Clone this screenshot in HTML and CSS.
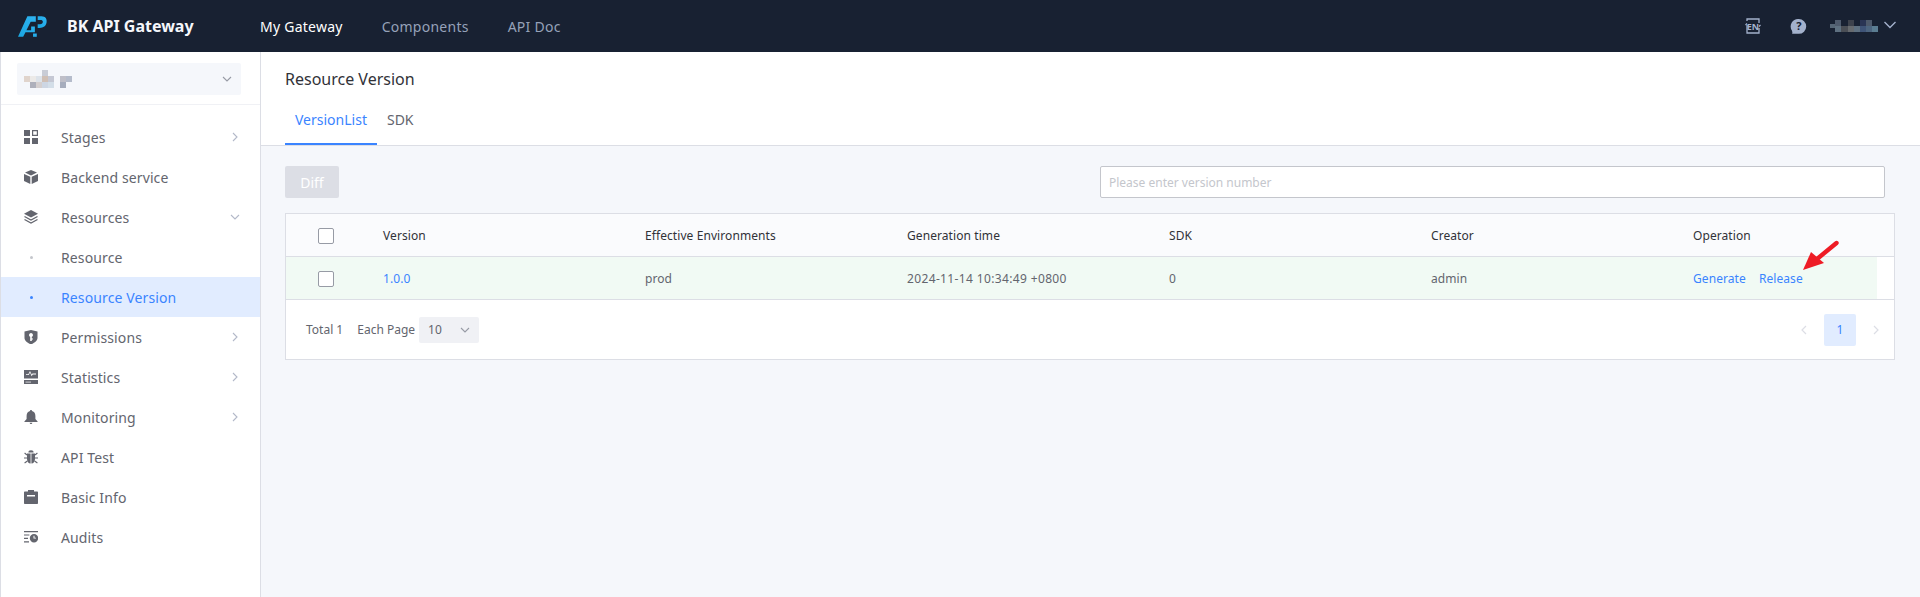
FILE: index.html
```html
<!DOCTYPE html>
<html lang="en">
<head>
  <meta charset="UTF-8" />
  <title>BK API Gateway</title>
  <meta name="viewport" content="width=device-width, initial-scale=1.0" />
  <link rel="stylesheet" href="styles.css">
</head>
<body>
  <header class="topbar">
    <div class="brand">
      <svg class="brand-logo" width="30" height="23" viewBox="0 0 32 24">
        <defs>
          <linearGradient id="logoFill" x1="0" y1="1" x2="1" y2="0">
            <stop offset="0" stop-color="#1aa5e0" />
            <stop offset="1" stop-color="#2fb4f2" />
          </linearGradient>
        </defs>
        <path fill="url(#logoFill)" d="M0 23 L10 1 H19 V7 H13.5 L9 16 H14 V12 H18 V18 H8 L5.5 23 Z" />
        <path fill="url(#logoFill)" d="M21 1 H25 C29.5 1 31 4 30.5 7.5 C30 11.5 27 13.5 23 13.5 H21 V9.5 H23.5 C25.5 9.5 26.5 8.5 26.5 7 C26.5 5.5 25.5 5 24 5 H21 Z" />
        <rect x="16" y="19.5" width="4" height="3.5" fill="url(#logoFill)" />
      </svg>
      <span class="brand-name">BK API Gateway</span>
    </div>
    <nav class="topnav">
      <a class="topnav-item active">My Gateway</a>
      <a class="topnav-item">Components</a>
      <a class="topnav-item">API Doc</a>
    </nav>
    <div class="topbar-right">
      <svg class="lang-icon" width="18" height="18" viewBox="0 0 18 18">
        <path d="M3 4 V2 H15 V6 M15 11 V16 H3 V8" fill="none" stroke="#a3b1cc" stroke-width="1.3" />
        <path d="M1.5 8 L3 6.5 M16.5 8 L15 9.5" stroke="#a3b1cc" stroke-width="1.2" />
        <text x="9" y="12.6" text-anchor="middle" class="lang-text">EN</text>
      </svg>
      <svg class="help-icon" width="17" height="17" viewBox="0 0 17 17">
        <path fill="#a3b1cc" d="M8.8 1 A7.4 7.4 0 1 1 8.8 15.8 H2 C2.6 15 2.4 14 1.9 12.4 A7.4 7.4 0 0 1 8.8 1 Z" />
        <text x="8.8" y="12.4" text-anchor="middle" class="help-text">?</text>
      </svg>
      <svg class="user-blur" width="48" height="12" viewBox="0 0 48 12" shape-rendering="crispEdges">
        <rect x="5" y="0" width="6" height="6" fill="#4f5b6d" />
        <rect x="18" y="0" width="6" height="6" fill="#3d424c" />
        <rect x="30" y="0" width="6" height="6" fill="#2a3555" />
        <rect x="36" y="0" width="6" height="6" fill="#4e5a6c" />
        <rect x="0" y="4" width="5" height="2" fill="#566676" />
        <rect x="0" y="6" width="11" height="2" fill="#566676" />
        <rect x="5" y="6" width="6" height="6" fill="#5e7080" />
        <rect x="11" y="6" width="7" height="6" fill="#4a4e55" />
        <rect x="18" y="6" width="6" height="6" fill="#666a6e" />
        <rect x="24" y="6" width="6" height="6" fill="#5e7080" />
        <rect x="30" y="6" width="6" height="6" fill="#3f5478" />
        <rect x="36" y="6" width="6" height="6" fill="#4d6580" />
        <rect x="42" y="6" width="6" height="6" fill="#5b7d92" />
      </svg>
      <svg class="user-caret" width="14" height="8" viewBox="0 0 14 8">
        <path d="M1.5 1 L7 6.5 L12.5 1" fill="none" stroke="#a3b1cc" stroke-width="1.4" />
      </svg>
    </div>
  </header>

  <div class="layout">
    <aside class="sidebar">
      <div class="picker-wrap">
        <div class="picker">
          <svg class="picker-blur" width="72" height="18" viewBox="0 0 72 18" shape-rendering="crispEdges">
            <rect x="27" y="0" width="6" height="6" fill="#c8ccd6" />
            <rect x="9" y="6" width="6" height="6" fill="#e0d4cc" />
            <rect x="15" y="6" width="6" height="6" fill="#eceae8" />
            <rect x="21" y="6" width="6" height="6" fill="#dde3ea" />
            <rect x="27" y="6" width="6" height="6" fill="#cfbfb5" />
            <rect x="33" y="6" width="6" height="6" fill="#c5c8d4" />
            <rect x="45" y="6" width="6" height="6" fill="#bfbfc8" />
            <rect x="51" y="6" width="6" height="6" fill="#b5bccb" />
            <rect x="15" y="12" width="6" height="6" fill="#aeb0bb" />
            <rect x="21" y="12" width="6" height="6" fill="#d4cfcf" />
            <rect x="27" y="12" width="6" height="6" fill="#cdd6e3" />
            <rect x="33" y="12" width="6" height="6" fill="#d3dee8" />
            <rect x="45" y="12" width="6" height="6" fill="#a6adbd" />
          </svg>
          <svg class="picker-caret" width="10" height="6" viewBox="0 0 10 6">
            <path d="M1 1 L5 5 L9 1" fill="none" stroke="#979ba5" stroke-width="1.1" />
          </svg>
        </div>
      </div>

      <ul class="menu">
        <li class="menu-item">
          <svg class="menu-icon" viewBox="0 0 14 14">
            <path d="M0 0h6v6H0zM0 8h6v6H0zM8 8h6v6H8z" />
            <path d="M8.6 .6h4.8v4.8H8.6z" fill="none" stroke="#63656e" stroke-width="1.2" />
          </svg>
          <span class="menu-text">Stages</span>
          <svg class="menu-arrow" viewBox="0 0 6 10"><path d="M1 1 L5 5 L1 9" /></svg>
        </li>
        <li class="menu-item">
          <svg class="menu-icon" viewBox="0 0 14 14">
            <path d="M7 0 L13 2.6 L7 5.4 L1 2.6 Z M0 4 L6.3 6.8 V14 L0 11 Z M14 4 L7.7 6.8 V14 L14 11 Z" />
          </svg>
          <span class="menu-text">Backend service</span>
        </li>
        <li class="menu-item">
          <svg class="menu-icon" viewBox="0 0 14 14">
            <path d="M7 0 L14 3.8 L7 7.6 L0 3.8 Z" />
            <path d="M.5 6.4 L7 10 L13.5 6.4 M.5 9.4 L7 13 L13.5 9.4" fill="none" stroke="#63656e" stroke-width="1.2" />
          </svg>
          <span class="menu-text">Resources</span>
          <svg class="menu-arrow down" viewBox="0 0 10 6"><path d="M1 1 L5 5 L9 1" /></svg>
        </li>
        <li class="menu-item sub">
          <i class="menu-dot"></i>
          <span class="menu-text">Resource</span>
        </li>
        <li class="menu-item sub active">
          <i class="menu-dot"></i>
          <span class="menu-text">Resource Version</span>
        </li>
        <li class="menu-item">
          <svg class="menu-icon" viewBox="0 0 14 14">
            <path fill-rule="evenodd" d="M7 0 L13.5 1.5 V8 C13.5 11 10 13 7 14.5 C4 13 .5 11 .5 8 V1.5 Z M7 3 A2 2 0 0 0 6.2 6.8 V11 H7.8 V9.6 H9 V8.4 H7.8 V6.8 A2 2 0 0 0 7 3 Z" />
          </svg>
          <span class="menu-text">Permissions</span>
          <svg class="menu-arrow" viewBox="0 0 6 10"><path d="M1 1 L5 5 L1 9" /></svg>
        </li>
        <li class="menu-item">
          <svg class="menu-icon" viewBox="0 0 14 14">
            <path fill-rule="evenodd" d="M0 0 H14 V8.6 H0 Z M2 5 H4.8 L6 2.6 L7.6 6.2 L8.8 4.4 H12 V3.6 H8.4 L7.7 4.6 L6 1 L4.3 4.2 H2 Z" />
            <path d="M0 10 H14 V14 H0 Z" />
            <path d="M1.5 11.6 H7 V12.6 H1.5 Z" fill="#fff" opacity=".7" />
          </svg>
          <span class="menu-text">Statistics</span>
          <svg class="menu-arrow" viewBox="0 0 6 10"><path d="M1 1 L5 5 L1 9" /></svg>
        </li>
        <li class="menu-item">
          <svg class="menu-icon" viewBox="0 0 14 14">
            <path d="M7 0 C7.6 0 8 .4 8 1 C10.4 1.5 11.4 3.4 11.4 6 V9 L13.6 11.4 V12 H.4 V11.4 L2.6 9 V6 C2.6 3.4 3.6 1.5 6 1 C6 .4 6.4 0 7 0 Z M5.6 12.8 H8.4 C8.2 13.6 7.6 14 7 14 C6.4 14 5.8 13.6 5.6 12.8 Z" />
          </svg>
          <span class="menu-text">Monitoring</span>
          <svg class="menu-arrow" viewBox="0 0 6 10"><path d="M1 1 L5 5 L1 9" /></svg>
        </li>
        <li class="menu-item">
          <svg class="menu-icon" viewBox="0 0 14 14">
            <path d="M4.4 2.6 A2.6 2.4 0 0 1 9.6 2.6 Z M3 3.6 H6.6 V13.6 C4.4 13.4 3 11.6 3 9 Z M7.4 3.6 H11 V9 C11 11.6 9.6 13.4 7.4 13.6 Z" />
            <path d="M3 5 L.6 3 M11 5 L13.4 3 M3 8 H0 M11 8 H14 M3.4 11 L.6 13 M10.6 11 L13.4 13" fill="none" stroke="#63656e" stroke-width="1.1" />
          </svg>
          <span class="menu-text">API Test</span>
        </li>
        <li class="menu-item">
          <svg class="menu-icon" viewBox="0 0 14 14">
            <path fill-rule="evenodd" d="M4 0 H10 V1.4 H13 C13.6 1.4 14 1.8 14 2.4 V13 C14 13.6 13.6 14 13 14 H1 C.4 14 0 13.6 0 13 V2.4 C0 1.8 .4 1.4 1 1.4 H4 Z M3 5 V6.4 H11 V5 Z" />
          </svg>
          <span class="menu-text">Basic Info</span>
        </li>
        <li class="menu-item">
          <svg class="menu-icon" viewBox="0 0 14 14">
            <path d="M0 1 H14 V2.2 H0 Z M0 4.4 H5.4 V5.6 H0 Z M0 7.8 H4 V9 H0 Z M0 11.2 H5 V12.4 H0 Z" />
            <path fill-rule="evenodd" d="M10 4 A4 4 0 1 1 10 12.4 A4 4 0 0 1 10 4 Z M9.5 5.8 V8.6 H12 V7.7 H10.5 V5.8 Z" />
          </svg>
          <span class="menu-text">Audits</span>
        </li>
      </ul>
    </aside>

    <main class="main">
      <div class="page-head">
        <h1 class="page-title">Resource Version</h1>
        <div class="tabs">
          <a class="tab active">VersionList</a>
          <a class="tab">SDK</a>
        </div>
      </div>

      <div class="page-body">
        <div class="toolbar">
          <button class="diff-btn" type="button">Diff</button>
          <input class="search" type="text" placeholder="Please enter version number" />
        </div>

        <div class="table-card">
          <table class="version-table">
            <colgroup>
              <col class="col-check" />
              <col class="col-data" />
              <col class="col-data" />
              <col class="col-data" />
              <col class="col-data" />
              <col class="col-data" />
              <col class="col-last" />
              <col class="col-gutter" />
            </colgroup>
            <thead>
              <tr>
                <th class="cell-check"><i class="checkbox"></i></th>
                <th>Version</th>
                <th>Effective Environments</th>
                <th>Generation time</th>
                <th>SDK</th>
                <th>Creator</th>
                <th>Operation</th>
                <th></th>
              </tr>
            </thead>
            <tbody>
              <tr>
                <td class="cell-check row-hl"><i class="checkbox"></i></td>
                <td class="row-hl"><a class="link">1.0.0</a></td>
                <td class="row-hl">prod</td>
                <td class="row-hl time">2024-11-14 10:34:49 +0800</td>
                <td class="row-hl">0</td>
                <td class="row-hl">admin</td>
                <td class="row-hl"><a class="link op">Generate</a><a class="link">Release</a></td>
                <td></td>
              </tr>
            </tbody>
          </table>
          <div class="table-foot">
            <span class="total">Total 1</span>
            <span class="per-page">Each Page</span>
            <div class="size-select">
              <span>10</span>
              <svg width="10" height="6" viewBox="0 0 10 6"><path d="M1 1 L5 5 L9 1" fill="none" stroke="#979ba5" stroke-width="1.1" /></svg>
            </div>
            <div class="pager">
              <svg width="6" height="10" viewBox="0 0 6 10"><path d="M5 1 L1 5 L5 9" fill="none" stroke="#dcdee5" stroke-width="1.2" /></svg>
              <span class="page-num">1</span>
              <svg width="6" height="10" viewBox="0 0 6 10"><path d="M1 1 L5 5 L1 9" fill="none" stroke="#dcdee5" stroke-width="1.2" /></svg>
            </div>
          </div>
        </div>
      </div>
    </main>
  </div>

  <!-- red annotation arrow over the Release link -->
  <svg class="note-arrow" width="40" height="36" viewBox="0 0 40 36">
    <path d="M34.5 4 L15 20" stroke="#ee1c25" stroke-width="4.4" stroke-linecap="round" />
    <path d="M1 31 L9 13 L22 24 Z" fill="#ee1c25" />
  </svg>
</body>
</html>
```

FILE: styles.css
```css
:root {
  --top-bg: #182132;
  --line: #dcdee5;
  --page-bg: #f5f7fb;
  --blue: #3a84ff;
  --text: #63656e;
  --title: #313238;
}

* {
  box-sizing: border-box;
}

html, body {
  height: 100%;
}

body {
  margin: 0;
  font-family: "Noto Sans", sans-serif;
  font-size: 14px;
  color: var(--text);
  background: var(--page-bg);
  display: flex;
  flex-direction: column;
  overflow: hidden;
}

/* top bar */
.topbar {
  height: 52px;
  flex: none;
  background: var(--top-bg);
  display: flex;
  align-items: center;
}

.brand {
  width: 260px;
  padding-left: 18px;
  display: flex;
  align-items: center;
}

.brand-name {
  margin-left: 19px;
  font-size: 16px;
  font-weight: 700;
  color: #f5f7fb;
}

.topnav {
  display: flex;
}

.topnav-item {
  margin-right: 39px;
  color: #96a2b9;
  letter-spacing: .25px;
}

.topnav-item.active {
  color: #fff;
}

.topbar-right {
  margin-left: auto;
  display: flex;
  align-items: center;
  padding-right: 23px;
}

.lang-text {
  font-size: 9px;
  font-weight: 700;
  fill: #a3b1cc;
}

.help-icon {
  margin-left: 28px;
}

.help-text {
  font-size: 11px;
  font-weight: 700;
  fill: #182132;
}

.user-blur {
  margin-left: 23px;
  margin-right: 5px;
}

.user-caret {
  margin-top: -2px;
}

/* sidebar */
.layout {
  flex: 1;
  display: flex;
  min-height: 0;
}

.sidebar {
  width: 261px;
  flex: none;
  background: #fff;
  border-left: 1px solid var(--line);
  border-right: 1px solid var(--line);
  letter-spacing: .12px;
}

.picker-wrap {
  height: 53px;
  padding: 11px 0 0 16px;
  border-bottom: 1px solid #f0f1f5;
}

.picker {
  height: 32px;
  width: 224px;
  background: var(--page-bg);
  border-radius: 2px;
  display: flex;
  align-items: center;
  justify-content: space-between;
  padding-right: 9px;
}

.picker-blur {
  margin-left: -2px;
}

.menu {
  list-style: none;
  margin: 0;
  padding: 12px 0 0;
}

.menu-item {
  height: 40px;
  display: flex;
  align-items: center;
  padding-left: 23px;
}

.menu-icon {
  width: 14px;
  height: 14px;
  fill: var(--text);
  flex: none;
}

.menu-text {
  margin-left: 23px;
}

.menu-arrow {
  margin-left: auto;
  margin-right: 22px;
  width: 6px;
  height: 10px;
  fill: none;
  stroke: #b3b9c9;
  stroke-width: 1.1;
}

.menu-arrow.down {
  width: 10px;
  height: 6px;
  margin-right: 20px;
}

.menu-dot {
  width: 3px;
  height: 3px;
  margin-left: 6px;
  margin-right: 5px;
  border-radius: 50%;
  background: #c4c6cc;
  flex: none;
}

.menu-item.active {
  background: #e1ecff;
  color: var(--blue);
}

.menu-item.active .menu-dot {
  background: var(--blue);
}

/* main */
.main {
  flex: 1;
  min-width: 0;
}

.page-head {
  height: 94px;
  padding: 16px 0 0 24px;
  background: #fff;
  border-bottom: 1px solid var(--line);
}

.page-title {
  margin: 0;
  font-size: 16px;
  font-weight: 400;
  line-height: 22px;
  color: var(--title);
}

.tabs {
  display: flex;
  height: 55px;
  padding-top: 5px;
}

.tab {
  padding: 0 10px;
  line-height: 50px;
  height: 50px;
  border-bottom: 2px solid transparent;
}

.tab.active {
  color: var(--blue);
  border-bottom-color: var(--blue);
}

.page-body {
  padding: 20px 25px 0 24px;
}

.toolbar {
  display: flex;
  justify-content: space-between;
  padding-right: 10px;
}

.diff-btn {
  width: 54px;
  height: 32px;
  border: none;
  border-radius: 2px;
  background: #dcdee5;
  color: #fff;
  font: inherit;
}

.search {
  width: 785px;
  height: 32px;
  border: 1px solid #c4c6cc;
  border-radius: 2px;
  padding: 0 8px;
  font: 12px "Noto Sans", sans-serif;
  background: #fff;
  outline: none;
}

.search::placeholder {
  color: #c4c6cc;
}

.table-card {
  margin-top: 15px;
  background: #fff;
  border: 1px solid var(--line);
}

.version-table {
  width: 100%;
  table-layout: fixed;
  border-collapse: separate;
  border-spacing: 0;
  font-size: 12px;
  letter-spacing: .08px;
}

.col-check { width: 81px; }
.col-data { width: 262px; }
.col-last { width: 200px; }
.col-gutter { width: 17px; }

.version-table th,
.version-table td {
  height: 43px;
  padding: 0 0 0 16px;
  text-align: left;
  font-weight: 400;
  border-bottom: 1px solid var(--line);
}

.version-table th {
  background: #fafbfd;
  color: var(--title);
}

.version-table .cell-check {
  padding: 0;
  text-align: center;
}

.version-table .row-hl {
  background: #f1faf4;
}

.version-table .time {
  letter-spacing: .36px;
}

.checkbox {
  display: block;
  width: 16px;
  height: 16px;
  margin: 2px 0 0 32px;
  background: #fff;
  border: 1px solid #979ba5;
  border-radius: 2px;
}

.link {
  color: var(--blue);
}

.link.op {
  margin-right: 13px;
}

.table-foot {
  height: 59px;
  display: flex;
  align-items: center;
  padding-left: 20px;
  font-size: 12px;
}

.per-page {
  margin-left: 14px;
}

.size-select {
  width: 60px;
  height: 26px;
  margin-left: 4px;
  background: #f0f1f5;
  border-radius: 2px;
  display: flex;
  align-items: center;
  justify-content: space-between;
  padding: 0 9px;
}

.pager {
  margin-left: auto;
  display: flex;
  align-items: center;
  padding-right: 15px;
}

.page-num {
  width: 32px;
  height: 32px;
  margin: 0 17px;
  background: #e1ecff;
  color: var(--blue);
  border-radius: 2px;
  display: flex;
  align-items: center;
  justify-content: center;
}

/* annotation drawn on top of the screenshot */
.note-arrow {
  position: absolute;
  left: 1802px;
  top: 239px;
}
```
